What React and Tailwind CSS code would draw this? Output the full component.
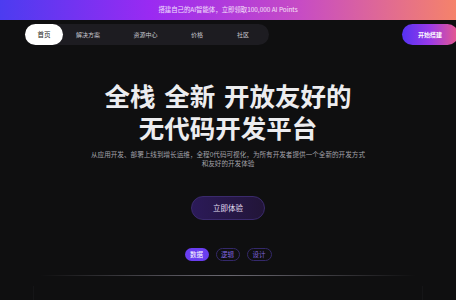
export default function App() {
  const font = { fontFamily: '"Noto Sans CJK SC", "Noto Sans", sans-serif' };
  return (
    <div className="w-full h-[300px] bg-[#0f0f10] overflow-hidden relative" style={font}>
      <div className="h-[20px] flex items-center justify-center bg-[linear-gradient(90deg,#4c3cf0_0%,#9a2af2_33%,#c74cc4_66%,#f5836a_100%)]">
        <span className="text-[6.4px] leading-none text-white/85">搭建自己的AI智能体，立即领取100,000 AI Points</span>
      </div>
      <div className="mt-[4px] flex items-center justify-between pl-[25px]">
        <div className="flex items-center h-[21px] rounded-full bg-[#1d1c21] pr-[3px]">
          <div className="h-[21px] w-[38px] rounded-full bg-white flex items-center justify-center text-[6.5px] text-[#1a1a1a] leading-none">首页</div>
          <div className="pl-[13px] pr-[17px] text-[6px] text-[#c9c8d0] leading-none">解决方案</div>
          <div className="px-[16.5px] text-[6px] text-[#c9c8d0] leading-none">资源中心</div>
          <div className="px-[17px] text-[6px] text-[#c9c8d0] leading-none">价格</div>
          <div className="px-[17px] text-[6px] text-[#c9c8d0] leading-none">社区</div>
        </div>
        <div className="h-[21px] w-[56px] mr-[-2px] rounded-full bg-[linear-gradient(90deg,#5532f2,#9a3ae8_50%,#e8598c)] flex items-center justify-center text-[6px] text-white font-bold leading-none">开始搭建</div>
      </div>
      <h1 className="mt-[34px] text-center text-[25.5px] leading-[32px] font-bold text-[#ececef] [word-spacing:3px]">
        全栈 全新 开放友好的<br />无代码开发平台
      </h1>
      <p className="mt-[7px] text-center text-[6.6px] leading-[9px] text-[#a3a2aa]">
        从应用开发、部署上线到增长运维，全程0代码可视化，为所有开发者提供一个全新的开发方式<br />和友好的开发体验
      </p>
      <div className="mt-[28px] flex justify-center">
        <div className="h-[24px] w-[74px] rounded-full border border-[#3a2a6c] bg-[linear-gradient(90deg,#2b1a58,#221538)] flex items-center justify-center text-[7.5px] text-[#e2def0] leading-none">立即体验</div>
      </div>
      <div className="mt-[28px] flex justify-center gap-[7px]">
        <div className="h-[13px] w-[24px] rounded-full bg-[#6a3ef0] flex items-center justify-center text-[6.5px] text-white leading-none">数据</div>
        <div className="h-[13px] w-[24px] rounded-full border border-[#34296a] flex items-center justify-center text-[6.5px] text-[#7d62dc] leading-none">逻辑</div>
        <div className="h-[13px] w-[25px] rounded-full border border-[#34296a] flex items-center justify-center text-[6.5px] text-[#7d62dc] leading-none">设计</div>
      </div>
      <div className="mt-[14px] mx-[40px] h-px bg-[linear-gradient(90deg,transparent,#5c5a62_40%,#6a6870_50%,#5c5a62_60%,transparent)]"></div>
      <div className="mt-[10px] mx-[33px] h-[40px] border-x border-[#151517]"></div>
    </div>
  );
}
